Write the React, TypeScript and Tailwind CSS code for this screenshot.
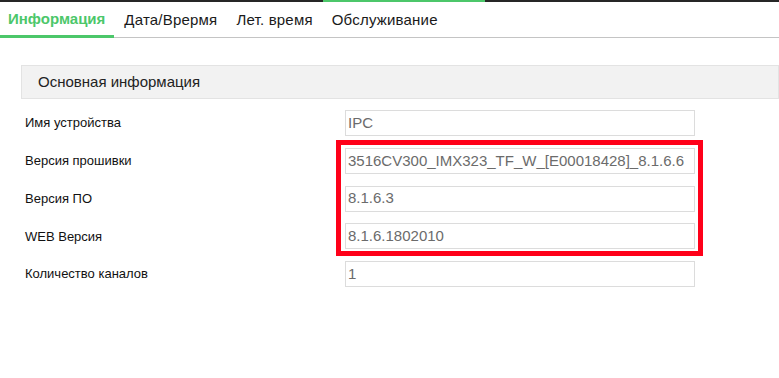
import React from "react";

const tabs = ["Информация", "Дата/Врермя", "Лет. время", "Обслуживание"];

const rows = [
  { label: "Имя устройства", value: "IPC" },
  { label: "Версия прошивки", value: "3516CV300_IMX323_TF_W_[E00018428]_8.1.6.6" },
  { label: "Версия ПО", value: "8.1.6.3" },
  { label: "WEB Версия", value: "8.1.6.1802010" },
  { label: "Количество каналов", value: "1" },
];

export default function App() {
  return (
    <div className="relative h-[378px] w-[779px] overflow-hidden bg-white font-['Liberation_Sans',Arial,sans-serif]">
      {/* top strip */}
      <div className="flex h-[2px] w-full bg-[#262626]">
        <div className="ml-[323px] w-[162px] bg-[#4cc76a]" />
      </div>

      {/* tabs */}
      <div className="flex h-[36px] items-end border-b border-[#c4c4c4] pl-[8px]">
        {tabs.map((t, i) => (
          <div
            key={t}
            className={
              i === 0
                ? "-mb-px -ml-[8px] mr-[10px] flex h-[35px] items-center border-b-[3px] border-[#4cc76a] pl-[8px] pr-[9px] pt-[1px] text-[15px] font-bold text-[#4cc76a]"
                : "mr-[19px] flex h-[34px] items-center text-[15px] tracking-[0.2px] text-[#1a1a1a]"
            }
          >
            {t}
          </div>
        ))}
      </div>

      {/* content */}
      <div className="pl-[21px] pt-[27px]">
        <div className="flex h-[34px] items-center border border-[#e3e3e3] bg-[#f2f2f2] pl-[16px] text-[15px] text-[#222]">
          Основная информация
        </div>
        <div className="flex flex-col gap-[11.75px] pt-[11px]">
          {rows.map((r) => (
            <div key={r.label} className="flex h-[26px] items-center">
              <div className="w-[324px] pl-[4px] text-[13px] text-[#111]">{r.label}</div>
              <div className="flex h-[26px] w-[350px] items-center border border-[#dcdcdc] pl-[2px] text-[15px] text-[#6b6b6b]">
                {r.value}
              </div>
            </div>
          ))}
        </div>
      </div>

      {/* annotation frame */}
      <div className="pointer-events-none absolute left-[336px] top-[140px] h-[116px] w-[367px] border-[5px] border-[#ff0019]" />
    </div>
  );
}
